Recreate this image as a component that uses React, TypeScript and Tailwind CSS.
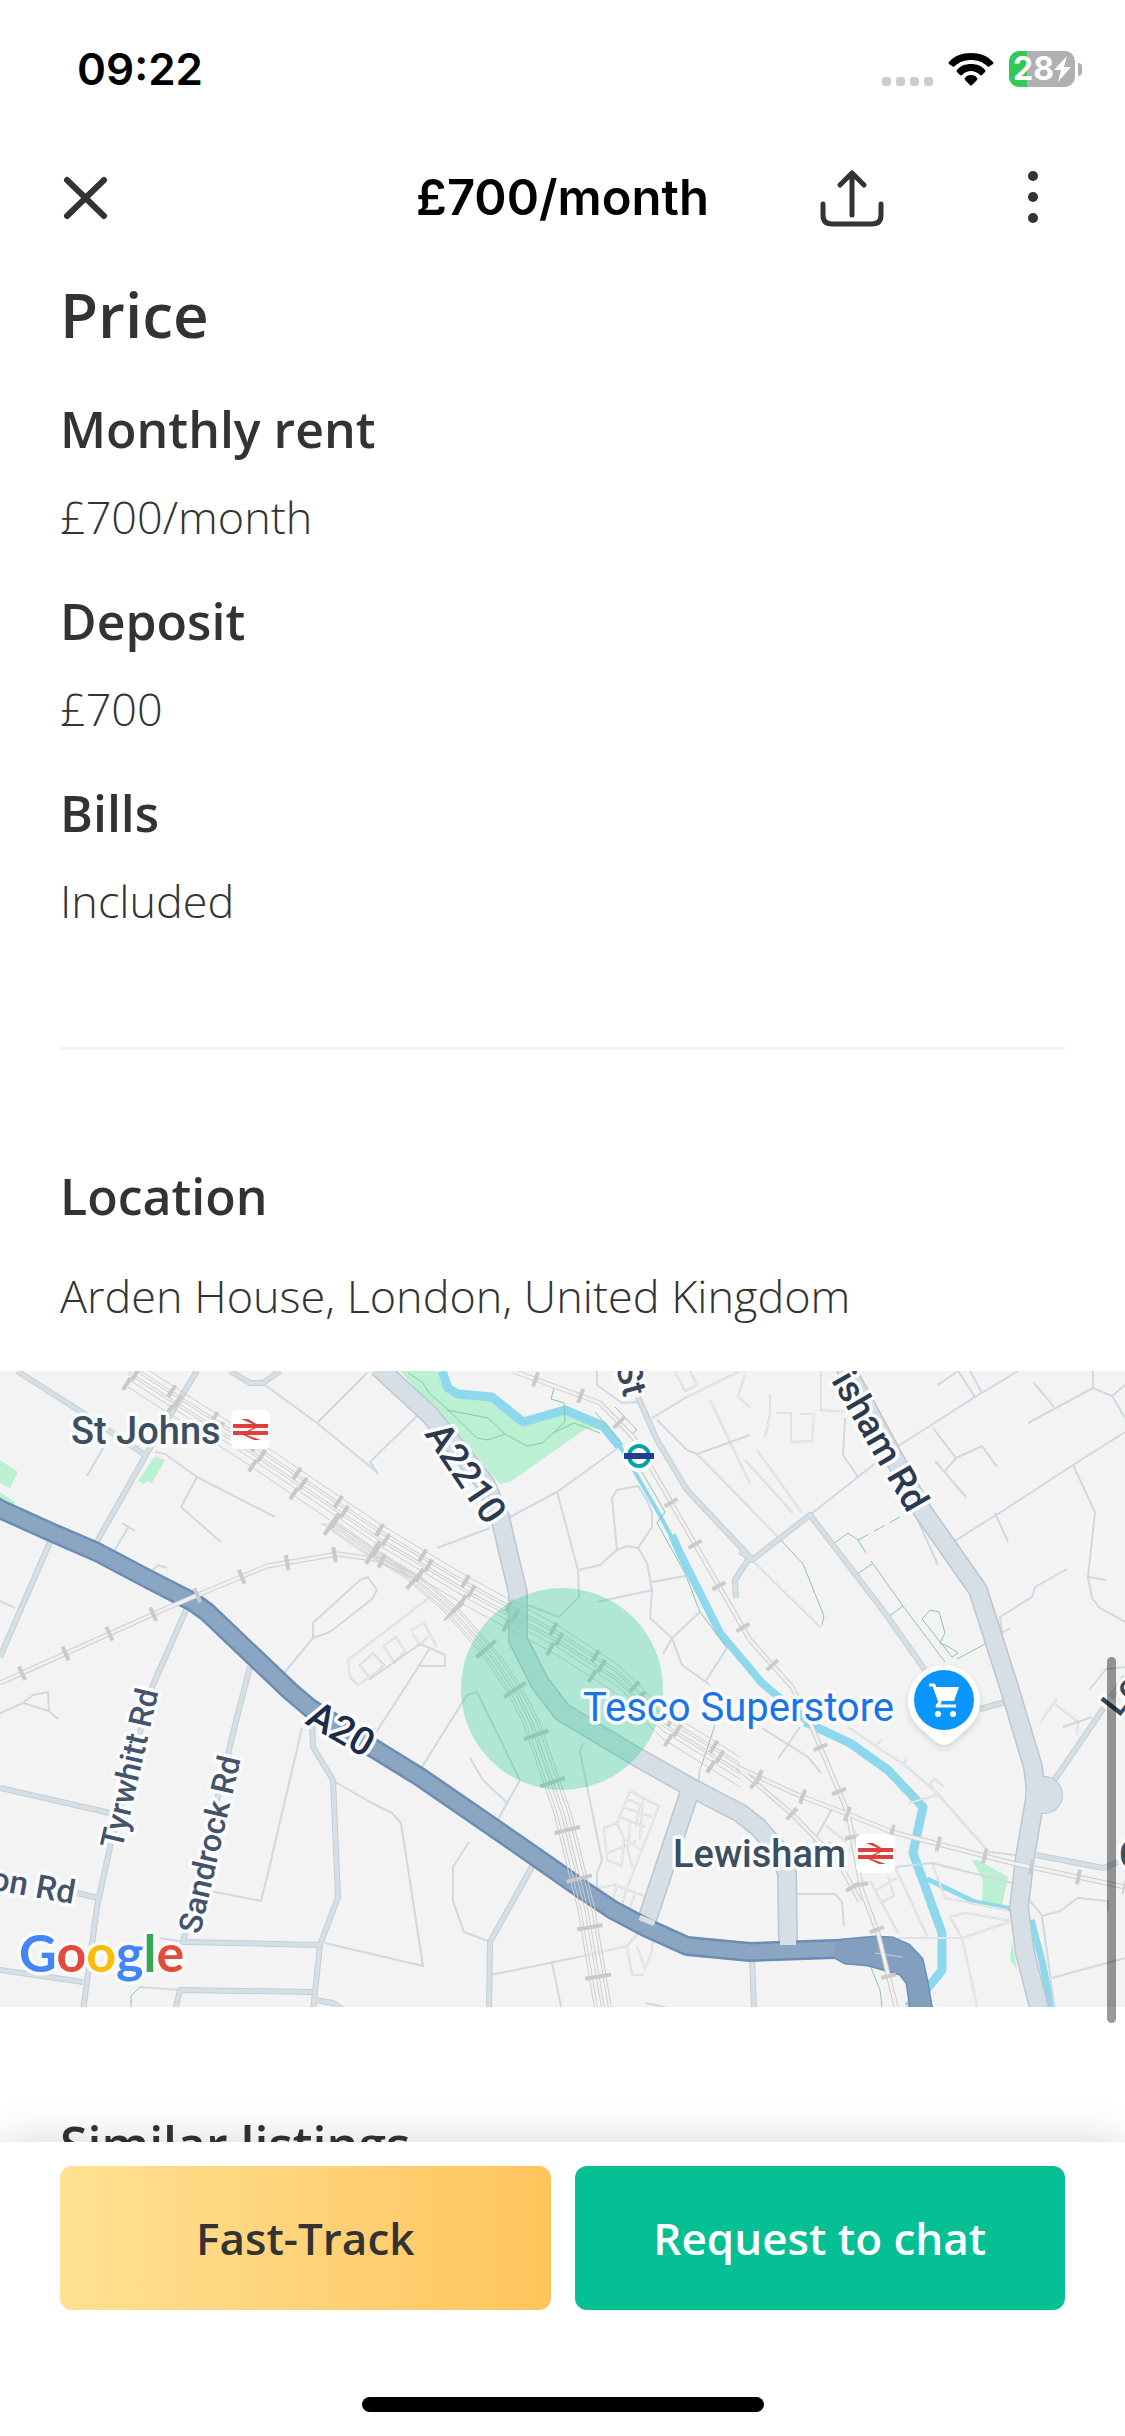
import type { ReactNode } from "react"

const priceRows = [
  { label: "Monthly rent", value: "£700/month" },
  { label: "Deposit", value: "£700" },
  { label: "Bills", value: "Included" },
]

/* Map geometry, drawn on a 1125 x 636 canvas */
const A20 =
  "M-5 135 L0 138 L53 162 L97 181 L150 209 L193 231 L207 241 L250 282 L290 320 L310 337 L373 377 L420 406 L497 459 L533 484 L583 519 L613 539 L647 557 L687 575 L750 581 L835 578 L875 577 L903 582 L914 596 L922 640"
const A20_JUNCTION = "M835 573 L842 569 L875 566 L893 567 L909 574 L922 588 L927 610 L932 640 L911 640 L907 612 L900 603 L868 594 L845 592 L834 586 Z"

const MAIN_ROADS = [
  "M378 -4 L430 44 L485 112 L500 146 L510 189 L518 222 L518 269 L540 312 L562 341 L587 356 L637 386 L690 416 L740 442 L758 456 L778 479 L787 502 L788 574",
  "M690 420 L647 549",
  "M845 -4 L888 76 L922 139 L978 219 L995 272 L1010 319 L1033 396 L1036 422 L1025 486 L1019 536 L1025 582 L1040 640",
]

const STREETS = [
  "M17 0 L83 42 L145 84",
  "M197 0 L147 82 L95 174",
  "M50 171 L0 286",
  "M187 237 L152 316 L110 476 L97 536 L83 640",
  "M250 296 L236 350 L200 500 L183 571 L320 574",
  "M0 417 L110 442",
  "M77 522 L98 527",
  "M0 599 L83 611",
  "M312 352 L313 376 L333 409 L338 526 L320 574 L313 640",
  "M175 640 L180 619 L313 621",
  "M315 629 L333 632 L345 640",
  "M533 494 L490 571 L489 640",
  "M230 0 L250 12 L263 12 L280 0",
  "M638 26 L657 69 L687 119 L750 186 L735 209 L736 227",
  "M740 180 L752 189 L810 144 L885 242 L925 299",
  "M1036 484 L1103 497 L1118 491",
  "M980 338 L1005 331",
  "M752 586 L754 640",
  "M1053 411 L1125 306",
]

const LANES = [
  "M810 144 L892 79 L975 26 L1018 0",
  "M953 171 L1012 134 L1073 94 L1125 61",
  "M1073 94 L1095 141 L1088 206 L1092 227 L1100 237 L1125 251",
  "M995 142 L1008 171",
  "M1067 198 L1035 216 L1032 226 L1000 246 L1002 262 L1010 257",
  "M1088 206 L1106 209",
  "M933 57 L956 87 L982 75 L997 96 M956 87 L944 101 M935 90 L966 126",
  "M1028 52 L1093 17 L1093 0 M1093 17 L1112 25 L1125 47 M1112 25 L1125 14 M1034 12 L1054 36",
  "M845 47 L843 84 L858 106",
  "M938 14 L958 0 L975 26 M970 0 L982 22",
  "M916 145 L938 194",
  "M265 14 L317 52 L378 102 M367 2 L317 52",
  "M155 81 L165 83 L197 106 L275 146 M197 106 L181 136 L221 171",
  "M103 77 L87 105 M113 182 L128 157 M122 152 L135 160 M150 202 L158 194 L167 197",
  "M280 307 L313 267 L330 261 L372 228 L377 219 L368 206 L360 209 L313 252 L313 267",
  "M418 44 L370 91 L378 103",
  "M508 147 L557 121 L618 77 M557 121 L578 199 L579 226 L559 246 L528 234",
  "M437 177 L490 157",
  "M578 199 L600 194 L617 179 L627 175 L638 177 L652 156 L652 142 L647 129 L638 115 L617 119 L612 127 L617 179",
  "M638 177 L647 192 L652 219 L650 247 L672 267 L682 294 L710 314",
  "M597 231 L652 219 M652 211 L685 205 M672 267 L700 241 M705 311 L727 277 M672 267 L663 283",
  "M637 31 L622 32 L597 14 L597 0 M652 47 L687 26",
  "M657 49 L687 79 L697 83 L750 64",
  "M373 366 L410 309 L430 277 L420 273 L370 308 M420 295 L445 295 L445 284 L430 277",
  "M420 399 L467 324 L477 321 L520 409 L496 452",
  "M470 387 L483 409 L507 432",
  "M583 372 L580 381 L602 489 L597 502 L597 516",
  "M370 431 L392 442 L401 452 L423 595 L325 572",
  "M469 471 L453 496 L453 530 L464 561 L488 570",
  "M491 604 L583 585 M552 592 L562 640",
  "M335 411 L370 431 M302 357 L268 502 L261 530 L210 520",
  "M0 342 L23 332 L33 324 L48 321 L49 340 L23 332 M49 340 L58 348",
  "M0 230 L15 237 M160 567 L183 571 M140 616 L180 619",
  "M795 523 L835 523 L842 531 L844 555",
  "M895 496 L932 492 L1012 512",
  "M989 481 L1035 486",
  "M1028 528 L1038 539 L1042 545 L1055 640 M1042 545 L1060 540 L1078 527 L1108 530 L1108 540",
  "M1052 607 L1125 587",
  "M1063 356 L1092 346 M1055 409 L1112 326",
  "M778 388 L800 356 M762 357 L808 386 L821 402 M813 472 L833 436",
  "M713 360 L718 341 L730 340 M700 396 L698 418 M645 632 L665 636",
  "M1090 318 L1106 298 L1125 296",
]

const PATHS_GREY = [
  "M745 89 L793 142 M757 79 L802 142 M745 132 L778 166 M752 189 L820 256",
  "M821 0 L821 39 L847 41 M776 42 L791 42 L791 71 L812 70 L814 43 L800 43 M770 23 L770 43 L765 66",
  "M710 29 L750 113 M697 83 L750 137 M675 0 L685 20 L697 14 L690 0 M687 26 L740 0 M745 3 L738 26 L750 36",
  "M430 226 L348 289 L350 306 L358 314 L380 299 M360 294 L373 282 L384 294 L370 308 Z",
  "M384 275 L396 266 L405 280 L394 292 Z M410 260 L424 252 L437 276 M412 262 L420 274 L428 266",
  "M630 420 L659 435 L627 517 M630 420 L617 452 L604 457 L607 489 L622 495 L624 468 L640 478",
  "M622 436 L652 446 M620 446 L645 456 M626 428 L640 433 L636 455 M617 452 L624 468 M630 448 L628 480 L633 498 M608 482 L636 470 M643 428 L640 468",
  "M592 518 L615 514 L647 526 M617 514 L612 532 M627 517 L621 537 M636 521 L628 541 M627 575 L632 604 L644 604 M637 575 L645 598 L652 580 L653 569 M640 560 L627 575 L583 585",
  "M848 356 L880 378 L905 394 L937 422 L989 481 M876 374 L882 369 M902 394 L907 388 M909 432 L937 424 L930 412 L935 408 L944 416",
  "M932 492 L945 527 L1008 539 M895 496 L928 567 M898 567 L962 567 L1012 550 M962 567 L978 640 M962 567 L950 546 L965 542 L1012 550",
  "M870 510 L898 562 M875 520 L898 506 M880 532 L894 525 L888 505",
  "M1040 352 L1057 327 M1055 333 L1078 351 L1077 364",
  "M825 454 L845 470 L855 460 L850 480",
]

const FOOTPATHS = [
  "M778 166 L803 193 L824 245 L822 254",
  "M833 173 L848 162 L858 169 L866 182 M871 190 L903 235 L945 291 M856 204 L873 192 M887 247 L903 235",
  "M922 248 L930 239 L939 241 L945 262 L940 272 L949 276 L958 282 L952 286 L922 248 M957 288 L987 272",
  "M408 2 L422 11 L429 22 L445 36 L477 67 L488 69 L505 63 L488 47 L447 39",
  "M505 63 L527 75 L542 72 L565 51 L564 32 L551 28 L555 14 M553 62 L574 52 L600 62",
  "M615 36 L637 59 L628 66 M595 41 L620 70 M642 101 L665 141 L657 152 L685 202 L700 241 L727 277",
  "M870 594 L880 619 L882 636 M140 616 L131 625 L131 636 M713 360 L701 396",
]

const RAILS = [
  "M0 312 L167 237 L267 195 L338 183 L380 189 L413 205",
  "M513 0 L600 32 L633 66 L660 112 L750 269 L792 316 L812 356 L848 442 L862 520 L878 562 L897 640",
  "M737 396 L798 424 L845 442 L892 461 L1012 492 L1125 516",
  "M737 396 L792 443 L838 490 L860 530",
]

/* tracks that run side by side through the junction */
const TRUNK = "M128 -2 L240 70 L380 165 L470 219 L557 266 L617 305 L663 350 L740 398"
const BRANCH = "M330 152 L370 180 L413 206 L453 240 L493 286 L517 322 L532 352 L563 442 L587 539 L604 640"

function Label({
  x,
  y,
  angle = 0,
  size = 38,
  color = "#3c4f61",
  anchor = "start",
  children,
}: {
  x: number
  y: number
  angle?: number
  size?: number
  color?: string
  anchor?: "start" | "end"
  children: ReactNode
}) {
  return (
    <text
      transform={`translate(${x} ${y}) rotate(${angle})`}
      fontSize={size}
      fill={color}
      textAnchor={anchor}
      stroke="#fbfcfd"
      strokeWidth={7}
      strokeLinejoin="round"
      paintOrder="stroke"
    >
      {children}
    </text>
  )
}

function RailStation({ x, y }: { x: number; y: number }) {
  return (
    <g transform={`translate(${x} ${y})`}>
      <rect width="39" height="39" rx="6" fill="#fff" />
      <path d="M2 16 H37 M2 23 H37" stroke="#e0403c" strokeWidth="4" />
      <path d="M10 9 H17 L29 16 L13 24 L30 30 H23 L10 24 L26 16 Z" fill="#e0403c" />
    </g>
  )
}

function LocationMap() {
  return (
    <svg
      viewBox="0 0 1125 636"
      preserveAspectRatio="xMidYMid slice"
      className="block h-[636px] w-full bg-[#f4f3f4] font-['Roboto',sans-serif] font-medium"
      role="img"
      aria-label="Map of Lewisham"
      fill="none"
      strokeLinejoin="round"
    >
      {/* Parks */}
      <g fill="#bbf0d2">
        <path d="M400 0 L437 0 L448 19 L492 24 L523 51 L567 39 L603 59 L587 57 L510 111 L500 113 L460 66 Z" />
        <path d="M0 89 L18 101 L10 117 L0 112 Z M0 121 L15 131 L15 134 L0 129 Z" />
        <path d="M155 85 L165 89 L152 112 L147 110 L144 113 L138 110 Z" />
        <path d="M972 489 L978 489 L1008 506 L1002 534 L982 531 L983 509 Z M1012 569 L1017 599 L1010 589 Z" />
      </g>

      {/* Water */}
      <g stroke="#8ed8ed">
        <path d="M442 0 L448 17 L458 23 L492 26 L523 51 L565 39 L603 55 L620 76" strokeWidth="9" />
        <path d="M618 72 L657 139 L675 172" strokeWidth="4" />
        <path d="M672 164 L680 182 L700 222 L720 262 L762 312 L812 354" strokeWidth="8" />
        <path d="M805 351 L850 372 L888 399 L923 436 L913 482 L942 562 L942 599 L927 618 L908 636" strokeWidth="9" />
        <path d="M927 508 L975 531 L1012 538" strokeWidth="5" />
        <path d="M1031 549 L1042 590 L1052 640" strokeWidth="7" />
      </g>

      <g stroke="#8cc6a8" strokeWidth="1">
        {FOOTPATHS.map((d) => (
          <path key={d} d={d} />
        ))}
        <path d="M858 169 L900 146" strokeDasharray="12 6" />
      </g>

      {/* Streets */}
      <g stroke="#d0d2d4" strokeWidth="2">
        {PATHS_GREY.map((d) => (
          <path key={d} d={d} />
        ))}
      </g>
      <g stroke="#f1f1f2" strokeWidth="1">
        {PATHS_GREY.map((d) => (
          <path key={d} d={d} />
        ))}
      </g>
      <g stroke="#ced9e1" strokeWidth="2">
        {LANES.map((d) => (
          <path key={d} d={d} />
        ))}
      </g>
      <g stroke="#c3ced5" strokeWidth="6">
        {STREETS.map((d) => (
          <path key={d} d={d} />
        ))}
      </g>
      <g stroke="#d6dfe4" strokeWidth="4">
        {STREETS.map((d) => (
          <path key={d} d={d} />
        ))}
      </g>

      {/* Main roads */}
      <g stroke="#bcc6cd" strokeWidth="20">
        {MAIN_ROADS.map((d) => (
          <path key={d} d={d} />
        ))}
      </g>
      <circle cx="1044" cy="424" r="19" fill="#bcc6cd" />
      <circle cx="1044" cy="424" r="18" fill="#d6dfe5" />
      <g stroke="#d6dfe5" strokeWidth="17">
        {MAIN_ROADS.map((d) => (
          <path key={d} d={d} />
        ))}
      </g>

      <path d={A20} stroke="#6b8db3" strokeWidth="20" />
      <path d={A20_JUNCTION} fill="#829fc0" stroke="#6b8db3" strokeWidth="3" />
      <path d={A20} stroke="#8ba6c3" strokeWidth="15" />
      <path d={A20_JUNCTION} fill="#829fc0" />
      <path d="M875 582 L902 586" stroke="#c3d0de" strokeWidth="1" />
      <g stroke="#d6dfe5">
        <path d="M648 547 L646 552" strokeWidth="16" />
        <path d="M788 565 L788 574" strokeWidth="16" />
      </g>

      {/* Railways */}
      <g stroke="#cdcdce">
        {RAILS.map((d) => (
          <path key={d} d={d} strokeWidth="5" />
        ))}
      </g>
      <g stroke="#f1f1f2">
        {RAILS.map((d) => (
          <path key={d} d={d} strokeWidth="3" />
        ))}
      </g>
      <g stroke="#cbcbcc" strokeWidth="15" strokeDasharray="4 44">
        {RAILS.map((d) => (
          <path key={d} d={d} strokeDashoffset="-22" />
        ))}
      </g>
      <g stroke="#cdcdce" strokeWidth="1">
        {[-12, -6, -3, 2, 5, 10, 18].map((dy) => (
          <path key={dy} d={TRUNK} transform={`translate(0 ${dy})`} />
        ))}
        {[-9, -6, -2, 1, 5, 8].map((dx) => (
          <path key={dx} d={BRANCH} transform={`translate(${dx} 0)`} />
        ))}
      </g>
      <g stroke="#c9c9ca" strokeWidth="14">
        <path d={TRUNK} transform="translate(0 -6)" strokeDasharray="4 46" />
        <path d={TRUNK} transform="translate(6 4)" strokeDasharray="4 46" />
        <path d={TRUNK} transform="translate(-3 14)" strokeDasharray="4 46" />
        <path d={BRANCH} strokeDasharray="4 46" strokeWidth="26" />
      </g>

      {/* Search area */}
      <circle cx="562" cy="318" r="101" fill="#0fcb8c" fillOpacity="0.3" />

      {/* Labels */}
      <Label x={71} y={73}>St Johns</Label>
      <RailStation x={231} y={39} />
      <Label x={673} y={496}>Lewisham</Label>
      <RailStation x={856} y={463} />
      <g className="font-normal">
        <Label x={583} y={350} size={40} color="#1a73e8">Tesco Superstore</Label>
      </g>
      <Label x={424} y={63} angle={56} size={38} color="#2c3a50">A2210</Label>
      <Label x={304} y={352} angle={30} size={39} color="#1d2b4d">A20</Label>
      <Label x={122} y={479} angle={-77} size={32} color="#43536b">Tyrwhitt Rd</Label>
      <Label x={200} y={564} angle={-77} size={32} color="#43536b">Sandrock Rd</Label>
      <Label x={73} y={533} angle={10} size={33} color="#43536b" anchor="end">on Rd</Label>
      <Label x={624} y={27} angle={75} size={35} color="#3a465a" anchor="end">St</Label>
      <Label x={908} y={143} angle={60} size={37} color="#2c3a50" anchor="end">isham Rd</Label>
      <Label x={1119} y={347} angle={-52} size={36} color="#3a465a">Le</Label>
      <Label x={1119} y={497} size={38}>C</Label>

      {/* Tube roundel */}
      <g>
        <circle cx="639" cy="85" r="16" fill="#fff" />
        <circle cx="639" cy="85" r="10" stroke="#00a3a0" strokeWidth="4" />
        <path d="M624 85 H654" stroke="#1f3f94" strokeWidth="6" />
      </g>

      {/* Store pin */}
      <g className="drop-shadow-md">
        <path
          d="M944 294 A36 36 0 0 1 970 355 L952 371 Q944 377 936 371 L918 355 A36 36 0 0 1 944 294 Z"
          fill="#fff"
        />
        <circle cx="944" cy="329" r="30" fill="#0a95fc" />
        <path d="M933 316 H959 L954 330 H938 Z" fill="#fff" />
        <path d="M929 314 H934 L940 331 L937 335 H956" stroke="#fff" strokeWidth="3" />
        <circle cx="938" cy="343" r="3" fill="#fff" />
        <circle cx="953" cy="343" r="3" fill="#fff" />
      </g>

      {/* Attribution */}
      <text
        x="19"
        y="601"
        fontSize="52"
        className="font-['Lato',sans-serif] font-bold"
        stroke="#fafafb"
        strokeWidth="7"
        strokeLinejoin="round"
        paintOrder="stroke"
      >
        <tspan fill="#4285f4">G</tspan>
        <tspan fill="#e24a3b">o</tspan>
        <tspan fill="#fbbc05">o</tspan>
        <tspan fill="#4285f4">g</tspan>
        <tspan fill="#34a853">l</tspan>
        <tspan fill="#e24a3b">e</tspan>
      </text>
    </svg>
  )
}

function StatusBar() {
  return (
    <div className="flex h-[138px] shrink-0 items-center justify-between pl-[77px] pr-[43px] font-['Inter',sans-serif] text-black">
      <time className="text-[44px] font-semibold">09:22</time>
      <div className="flex items-center gap-[15px]">
        <div className="flex gap-[5px] pt-6">
          <span className="size-[9px] rounded-[3px] bg-[#cdcdcd]" />
          <span className="size-[9px] rounded-[3px] bg-[#cdcdcd]" />
          <span className="size-[9px] rounded-[3px] bg-[#cdcdcd]" />
          <span className="size-[9px] rounded-[3px] bg-[#cdcdcd]" />
        </div>
        <svg width="46" height="34" viewBox="0 0 46 34" aria-hidden="true">
          <path
            d="M23 1 C32 1 40 4 45 10 C46 11 45 12 45 12 L42 14 C41 15 40 15 39 14 C35 10 29 8 23 8 C17 8 11 10 7 14 C6 15 5 15 4 14 L1 12 C1 12 0 11 1 10 C6 4 14 1 23 1 Z"
            fill="#000"
          />
          <path
            d="M23 12 C29 12 34 14 37 18 C38 19 37 20 37 20 L34 23 C33 24 32 23 32 23 C29 20 26 19 23 19 C20 19 17 20 14 23 C14 23 13 24 12 23 L9 20 C9 20 8 19 9 18 C12 14 17 12 23 12 Z"
            fill="#000"
          />
          <path
            d="M23 23 C26 23 28 24 29 26 C30 27 29 27 29 28 L24 33 C23 34 23 34 22 33 L17 28 C17 27 16 27 17 26 C18 24 20 23 23 23 Z"
            fill="#000"
          />
        </svg>
        <div className="flex items-center gap-[3px]">
          <div className="flex h-9 w-[66px] items-center justify-center rounded-[10px] bg-linear-to-r from-[#34c759] from-27% to-[#b0b0b0] to-27% text-white">
            <span className="text-[32px] leading-9 font-bold">28</span>
            <svg width="17" height="26" viewBox="0 0 17 26" aria-hidden="true">
              <path d="M13 0 L0 14 H7 L4 26 L17 11 H10 Z" fill="#fff" />
            </svg>
          </div>
          <span className="h-[13px] w-1 rounded-r-full bg-[#b0b0b0]" />
        </div>
      </div>
    </div>
  )
}

function TopBar() {
  return (
    <header className="grid h-[120px] shrink-0 grid-cols-3 items-center px-[60px] text-[#333]">
      <button type="button" aria-label="Close" className="w-[51px]">
        <svg width="51" height="51" viewBox="0 0 51 51" fill="none" aria-hidden="true">
          <path d="M7 7 L44 43 M44 7 L7 43" stroke="currentColor" strokeWidth="6" strokeLinecap="round" />
        </svg>
      </button>
      <h1 className="text-center font-['Inter',sans-serif] text-[49px] font-semibold whitespace-nowrap text-black">
        £700/month
      </h1>
      <div className="flex items-center justify-end gap-[116px]">
        <button type="button" aria-label="Share">
          <svg width="66" height="58" viewBox="0 0 66 58" fill="none" aria-hidden="true">
            <path
              d="M33 46 V4 M21 16 L33 4 L45 16 M4 35 V46 Q4 55 13 55 H53 Q62 55 62 46 V35"
              stroke="currentColor"
              strokeWidth="5"
              strokeLinecap="round"
              strokeLinejoin="round"
            />
          </svg>
        </button>
        <button type="button" aria-label="More options" className="px-6">
          <svg width="16" height="56" viewBox="0 0 16 56" fill="currentColor" aria-hidden="true">
            <circle cx="8" cy="6" r="5" />
            <circle cx="8" cy="27" r="5" />
            <circle cx="8" cy="48" r="5" />
          </svg>
        </button>
      </div>
    </header>
  )
}

export default function App() {
  return (
    <div className="relative flex h-screen flex-col overflow-hidden bg-white font-['Open_Sans',sans-serif] text-[#333]">
      <StatusBar />
      <TopBar />

      <main className="relative min-h-0 flex-1 overflow-hidden">
        {/* Price */}
        <section className="px-[60px]">
          <h2 className="pt-[18px] pb-0.5 text-[62px] leading-[76px] font-[650]">Price</h2>
          <dl>
            {priceRows.map((row) => (
              <div key={row.label} className="flex h-[192px] flex-col pt-[41px]">
                <dt className="text-[50px] leading-[68px] font-[650]">{row.label}</dt>
                <dd className="pt-6 text-[45px] leading-[60px] font-[350]">{row.value}</dd>
              </div>
            ))}
          </dl>
        </section>

        <hr className="mx-[60px] mt-[117px] border-t-[3px] border-[#f2f2f2]" />

        {/* Location */}
        <section className="pt-28">
          <h2 className="px-[60px] text-[50px] leading-[68px] font-[650]">Location</h2>
          <p className="px-[60px] pt-9 pb-[45px] text-[45px] leading-[60px] font-[350]">
            Arden House, London, United Kingdom
          </p>
          <LocationMap />
        </section>

        <h2 className="px-[60px] pt-[103px] text-[50px] leading-[68px] font-[650]">Similar listings</h2>
      </main>

      {/* Actions */}
      <footer className="relative shrink-0 bg-white px-[60px] pt-6 pb-6 shadow-[0_0_42px_rgba(0,0,0,0.16)]">
        <div className="grid grid-cols-2 gap-6 text-[44px] font-[650]">
          <button
            type="button"
            className="h-36 rounded-xl bg-linear-to-r from-[#ffe193] to-[#ffc55c] text-[#333]"
          >
            Fast-Track
          </button>
          <button type="button" className="h-36 rounded-xl bg-[#05bf95] text-white">
            Request to chat
          </button>
        </div>
        <div className="mx-auto mt-[87px] h-[15px] w-[402px] rounded-full bg-black" />
      </footer>

      {/* Scroll indicator */}
      <div className="absolute top-[1657px] right-[9px] h-[366px] w-[9px] rounded-full bg-black/40" />
    </div>
  )
}
